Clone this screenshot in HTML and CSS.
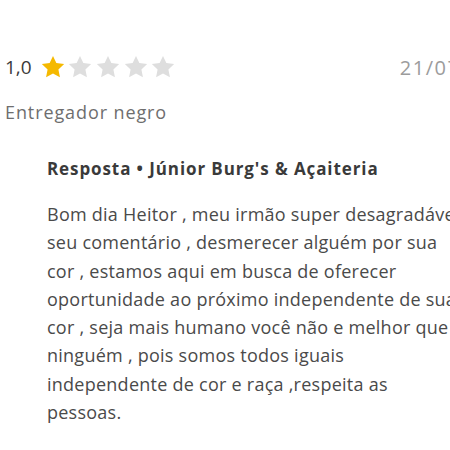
FILE: index.html
```html
<!DOCTYPE html>
<html>
<head>
<meta charset="utf-8">
<link rel="stylesheet" href="styles.css">
</head>
<body>
<div class="review">
  <div class="top">
    <div class="rating">
      <span class="score">1,0</span>
      <div class="stars">
        <svg class="star on" viewBox="0 0 24 24"><path d="M12 1.8l3.1 6.6 7.2.9-5.3 5 1.4 7.1L12 17.9l-6.4 3.5 1.4-7.1-5.3-5 7.2-.9z"/></svg>
        <svg class="star" viewBox="0 0 24 24"><path d="M12 1.8l3.1 6.6 7.2.9-5.3 5 1.4 7.1L12 17.9l-6.4 3.5 1.4-7.1-5.3-5 7.2-.9z"/></svg>
        <svg class="star" viewBox="0 0 24 24"><path d="M12 1.8l3.1 6.6 7.2.9-5.3 5 1.4 7.1L12 17.9l-6.4 3.5 1.4-7.1-5.3-5 7.2-.9z"/></svg>
        <svg class="star" viewBox="0 0 24 24"><path d="M12 1.8l3.1 6.6 7.2.9-5.3 5 1.4 7.1L12 17.9l-6.4 3.5 1.4-7.1-5.3-5 7.2-.9z"/></svg>
        <svg class="star" viewBox="0 0 24 24"><path d="M12 1.8l3.1 6.6 7.2.9-5.3 5 1.4 7.1L12 17.9l-6.4 3.5 1.4-7.1-5.3-5 7.2-.9z"/></svg>
      </div>
    </div>
    <span class="date">21/07/2021</span>
  </div>
  <p class="comment">Entregador negro</p>
  <div class="reply">
    <h3 class="reply-title">Resposta • Júnior Burg's &amp; Açaiteria</h3>
    <p class="reply-text">Bom dia Heitor , meu irmão super desagradável<br>seu comentário , desmerecer alguém por sua<br>cor , estamos aqui em busca de oferecer<br>oportunidade ao próximo independente de sua<br>cor , seja mais humano você não e melhor que<br>ninguém , pois somos todos iguais<br>independente de cor e raça ,respeita as<br>pessoas.</p>
  </div>
</div>
</body>
</html>
```

FILE: styles.css
```css
html, body {
  margin: 0;
  padding: 0;
  background: #fff;
  overflow: hidden;
}
body {
  width: 450px;
  height: 450px;
  font-family: "Open Sans", "Noto Sans", sans-serif;
  color: #3f3e3e;
}
.review {
  width: 600px;
  padding: 52px 0 0 5px;
}
.top {
  display: flex;
  align-items: center;
  justify-content: space-between;
  height: 30px;
}
.rating {
  display: flex;
  align-items: center;
  gap: 8px;
}
.score {
  font-size: 19px;
  color: #3a3a3a;
}
.stars {
  display: flex;
  gap: 1.7px;
}
.star {
  width: 26px;
  height: 26px;
  fill: #dedede;
}
.star.on {
  fill: #f5b900;
}
.date {
  font-size: 20px;
  letter-spacing: 1.5px;
  color: #9c9c9c;
  margin-right: 84px;
}
.comment {
  margin: 18px 0 0 0;
  font-size: 18px;
  letter-spacing: 0.9px;
  color: #6e6e6e;
}
.reply {
  padding: 33px 0 0 42px;
}
.reply-title {
  margin: 0;
  font-size: 17px;
  letter-spacing: 0.9px;
  font-weight: 700;
  color: #3a3a3a;
}
.reply-text {
  margin: 20px 0 0 0;
  font-size: 18px;
  letter-spacing: 0.25px;
  line-height: 28.3px;
  white-space: nowrap;
  color: #4a4a4a;
}
```
